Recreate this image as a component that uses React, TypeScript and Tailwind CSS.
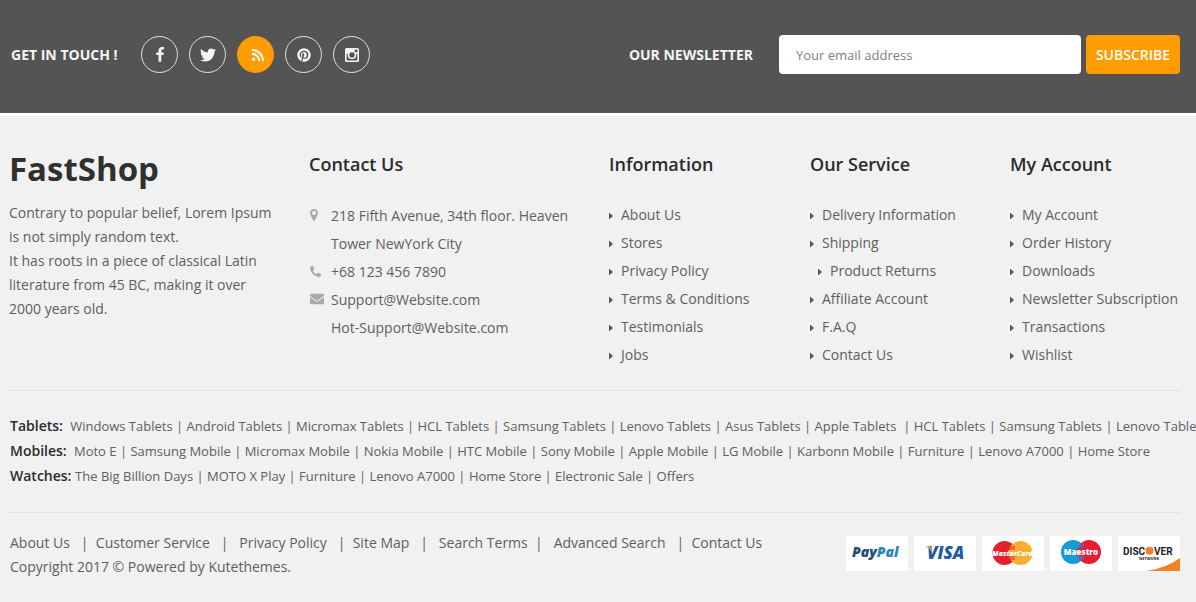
import type { ReactNode } from "react";
import { FaEnvelope, FaPhoneAlt, FaPinterest, FaRss, FaTwitter } from "react-icons/fa";

type Entry = { label: string; indent?: boolean };

const information: Entry[] = [
  { label: "About Us" },
  { label: "Stores" },
  { label: "Privacy Policy" },
  { label: "Terms & Conditions" },
  { label: "Testimonials" },
  { label: "Jobs" },
];

const services: Entry[] = [
  { label: "Delivery Information" },
  { label: "Shipping" },
  { label: "Product Returns", indent: true },
  { label: "Affiliate Account" },
  { label: "F.A.Q" },
  { label: "Contact Us" },
];

const account: Entry[] = [
  { label: "My Account" },
  { label: "Order History" },
  { label: "Downloads" },
  { label: "Newsletter Subscription" },
  { label: "Transactions" },
  { label: "Wishlist" },
];

const directory = [
  {
    title: "Tablets:  ",
    items: [
      "Windows Tablets", "Android Tablets", "Micromax Tablets", "HCL Tablets", "Samsung Tablets", "Lenovo Tablets",
      "Asus Tablets", "Apple Tablets ", "HCL Tablets", "Samsung Tablets", "Lenovo Tablets",
    ],
  },
  {
    title: "Mobiles:  ",
    items: [
      "Moto E", "Samsung Mobile", "Micromax Mobile", "Nokia Mobile", "HTC Mobile", "Sony Mobile", "Apple Mobile",
      "LG Mobile", "Karbonn Mobile", "Furniture", "Lenovo A7000", "Home Store",
    ],
  },
  {
    title: "Watches: ",
    items: ["The Big Billion Days", "MOTO X Play", "Furniture", "Lenovo A7000", "Home Store", "Electronic Sale", "Offers"],
  },
];

const legal = [
  { label: "About Us", after: "   |  " },
  { label: "Customer Service", after: "   |   " },
  { label: "Privacy Policy", after: "   |  " },
  { label: "Site Map", after: "   |   " },
  { label: "Search Terms", after: "  |   " },
  { label: "Advanced Search", after: "   |  " },
  { label: "Contact Us", after: "" },
];

function FacebookIcon() {
  return (
    <svg viewBox="0 0 1792 1792" className="size-4" fill="currentColor" aria-hidden="true">
      <path d="M1343 12v264h-157q-86 0-116 36t-30 108v189h293l-39 296h-254v759h-306v-759h-255v-296h255v-218q0-186 104-288.500t277-102.500q147 0 228 12z" />
    </svg>
  );
}

function MarkerIcon() {
  return (
    <svg viewBox="384 128 1024 1536" className="h-3 w-2" fill="currentColor" aria-hidden="true">
      <path d="M1152 640q0-106-75-181t-181-75-181 75-75 181 75 181 181 75 181-75 75-181zm256 0q0 109-33 179l-364 774q-16 33-47.500 52t-67.500 19-67.500-19-46.500-52l-365-774q-33-70-33-179 0-212 150-362t362-150 362 150 150 362z" />
    </svg>
  );
}

function InstagramIcon() {
  return (
    <svg viewBox="0 0 14 14" className="size-3.5" fill="currentColor" aria-hidden="true">
      <path
        fillRule="evenodd"
        d="M1.6 0h10.8A1.6 1.6 0 0 1 14 1.6v10.8a1.6 1.6 0 0 1-1.6 1.6H1.6A1.6 1.6 0 0 1 0 12.4V1.6A1.6 1.6 0 0 1 1.6 0ZM10.3 1.6a.6.6 0 0 0-.6.6v1.5c0 .3.3.6.6.6h1.6c.3 0 .6-.3.6-.6V2.2a.6.6 0 0 0-.6-.6h-1.6ZM1.6 5.9v6c0 .3.3.5.5.5h9.8c.3 0 .5-.2.5-.5v-6h-1.3c.9 3-1.2 5.2-4.1 5.2S2 8.900 2.900 5.900H1.600ZM7 4.300a2.700 2.700 0 1 0 0 5.400 2.700 2.700 0 0 0 0-5.400Z"
      />
    </svg>
  );
}

function Social({ name, active, children }: { name: string; active?: boolean; children: ReactNode }) {
  return (
    <a
      href="#"
      aria-label={name}
      className={
        active
          ? "flex size-[37px] items-center justify-center rounded-full bg-[#ff9c00] text-[#f4f4f4]"
          : "flex size-[37px] items-center justify-center rounded-full border border-[#e0e0e0] text-[#f4f4f4]"
      }
    >
      {children}
    </a>
  );
}

function Heading({ children }: { children: ReactNode }) {
  return <h2 className="text-lg leading-7 font-semibold text-[#2b2b2b]">{children}</h2>;
}

function LinkColumn({ title, entries }: { title: string; entries: Entry[] }) {
  return (
    <nav aria-label={title}>
      <Heading>{title}</Heading>
      <ul className="mt-[23px]">
        {entries.map((e) => (
          <li key={e.label} className={e.indent ? "flex items-center gap-2 pl-2 leading-7" : "flex items-center gap-2 leading-7"}>
            <svg viewBox="0 0 4 8" className="mt-0.5 h-2 w-1 shrink-0" fill="#555" aria-hidden="true">
              <path d="M0 0.500 4 4 0 7.500Z" />
            </svg>
            <a href="#" className="whitespace-nowrap">{e.label}</a>
          </li>
        ))}
      </ul>
    </nav>
  );
}

function ContactRow({ icon, children }: { icon: ReactNode; children: ReactNode }) {
  return (
    <li className="flex leading-7">
      <span className="flex h-[26px] w-[22px] shrink-0 items-center pl-px text-[#a9a9a9]">{icon}</span>
      <span>{children}</span>
    </li>
  );
}

function Card({ name, children }: { name: string; children: ReactNode }) {
  return (
    <li className="bg-white">
      <svg viewBox="0 0 62 35" className="block h-[35px] w-[62px]" role="img" aria-label={name} fontFamily="'Open Sans', sans-serif">
        {children}
      </svg>
    </li>
  );
}

export default function App() {
  return (
    <footer className="min-h-screen overflow-x-clip bg-[#f1f1f1] font-['Open_Sans',sans-serif] text-sm text-[#606060]">
      <div className="flex items-center justify-between border-b-3 border-white bg-[#545454] pt-[35px] pr-4 pb-[39px] pl-[11px]">
        <div className="flex items-center gap-6">
          <h2 className="font-bold whitespace-nowrap text-[#f4f4f4]">GET IN TOUCH !</h2>
          <div className="flex gap-[11px]">
            <Social name="Facebook"><FacebookIcon /></Social>
            <Social name="Twitter"><FaTwitter className="size-4" /></Social>
            <Social name="RSS" active><FaRss className="ml-1 size-3.5" /></Social>
            <Social name="Pinterest"><FaPinterest className="size-3.5" /></Social>
            <Social name="Instagram"><InstagramIcon /></Social>
          </div>
        </div>
        <form className="flex items-center" onSubmit={(e) => e.preventDefault()}>
          <label htmlFor="email" className="mr-[26px] font-bold whitespace-nowrap text-[#f4f4f4]">OUR NEWSLETTER</label>
          <input
            id="email"
            type="email"
            placeholder="Your email address"
            className="h-[39px] w-[302px] rounded bg-white px-[17px] text-[13px] text-[#555] outline-none placeholder:text-[#808080]"
          />
          <button type="submit" className="ml-[5px] h-[39px] w-[94px] rounded bg-[#ff9c00] font-semibold text-white">
            SUBSCRIBE
          </button>
        </form>
      </div>

      <div className="pr-4 pl-[9px]">
        <div className="grid grid-cols-[300fr_300fr_201fr_200fr_170fr] border-b border-[#e2e2e2] pt-[34px] pb-[21px]">
          <section>
            <h1 className="text-[33px] leading-[38px] font-bold text-[#303030]">FastShop</h1>
            <p className="mt-[13px] leading-6">
              Contrary to popular belief, Lorem Ipsum
              <br />
              is not simply random text.
              <br />
              It has roots in a piece of classical Latin
              <br />
              literature from 45 BC, making it over
              <br />
              2000 years old.
            </p>
          </section>
          <section>
            <Heading>Contact Us</Heading>
            <ul className="mt-6">
              <ContactRow icon={<MarkerIcon />}>
                218 Fifth Avenue, 34th floor. Heaven
                <br />
                Tower NewYork City
              </ContactRow>
              <ContactRow icon={<FaPhoneAlt className="size-[11px]" />}>+68 123 456 7890</ContactRow>
              <ContactRow icon={<FaEnvelope className="size-3.5" />}>
                <a href="mailto:Support@Website.com">Support@Website.com</a>
                <br />
                <a href="mailto:Hot-Support@Website.com">Hot-Support@Website.com</a>
              </ContactRow>
            </ul>
          </section>
          <LinkColumn title="Information" entries={information} />
          <LinkColumn title="Our Service" entries={services} />
          <LinkColumn title="My Account" entries={account} />
        </div>

        <div className="border-b border-[#e2e2e2] pt-[22px] pb-6 pl-px">
          {directory.map((row) => (
            <div key={row.title} className="h-[25px] text-[13px] leading-[25px] whitespace-pre">
              <span className="text-sm leading-[25px] font-semibold text-[#2b2b2b]">{row.title}</span>
              {row.items.map((item, i) => (
                <span key={i}>
                  {i > 0 && " | "}
                  <a href="#">{item}</a>
                </span>
              ))}
            </div>
          ))}
        </div>

        <div className="flex justify-between pt-[18px] pb-6 pl-px">
          <div className="leading-6">
            <div className="whitespace-pre">
              {legal.map((l) => (
                <span key={l.label}>
                  <a href="#">{l.label}</a>
                  {l.after}
                </span>
              ))}
            </div>
            <p>Copyright 2017 © Powered by Kutethemes.</p>
          </div>
          <ul className="mt-[5px] flex items-start gap-1.5">
            <Card name="PayPal">
              <text x="6" y="21" fontSize="14" fontWeight="800" fontStyle="italic" fill="#21507a">
                Pay<tspan fill="#2787b8">Pal</tspan>
              </text>
            </Card>
            <Card name="Visa">
              <text x="13" y="23" fontSize="17" fontWeight="800" fontStyle="italic" fill="#1d5ba6">VISA</text>
              <path d="M11 10.500h5.500l2 6-3-3.800Z" fill="#f5a02a" />
            </Card>
            <Card name="MasterCard">
              <circle cx="22.500" cy="17" r="12" fill="#e4202f" />
              <circle cx="38.500" cy="17" r="12" fill="#fbae30" />
              <path d="M27 11h6M26 13h7M26 21h7M27 23h6" stroke="#e4202f" strokeWidth="1" />
              <text x="30.500" y="19.500" textAnchor="middle" fontSize="7" fontWeight="800" fontStyle="italic" fill="#fff">MasterCard</text>
            </Card>
            <Card name="Maestro">
              <circle cx="23" cy="16" r="12" fill="#169bd7" />
              <circle cx="39" cy="16" r="12" fill="#e61c35" />
              <path d="M28 9h6M27 11h7M27 21h7M28 23h6" stroke="#169bd7" strokeWidth="1" />
              <text x="31" y="19" textAnchor="middle" fontSize="8" fontWeight="800" fill="#fff">Maestro</text>
            </Card>
            <Card name="Discover Network">
              <path d="M29 35Q48 32 62 22v13Z" fill="#f58220" />
              <circle cx="31.500" cy="14.700" r="4" fill="#f58220" />
              <text x="5" y="18.500" fontSize="10" fontWeight="700" fill="#222" fontFamily="Roboto, sans-serif">DISC</text>
              <text x="36" y="18.500" fontSize="10" fontWeight="700" fill="#222" fontFamily="Roboto, sans-serif">VER</text>
              <text x="31" y="23.500" textAnchor="middle" fontSize="4" fontWeight="700" fill="#222">NETWORK</text>
            </Card>
          </ul>
        </div>
      </div>
    </footer>
  );
}
